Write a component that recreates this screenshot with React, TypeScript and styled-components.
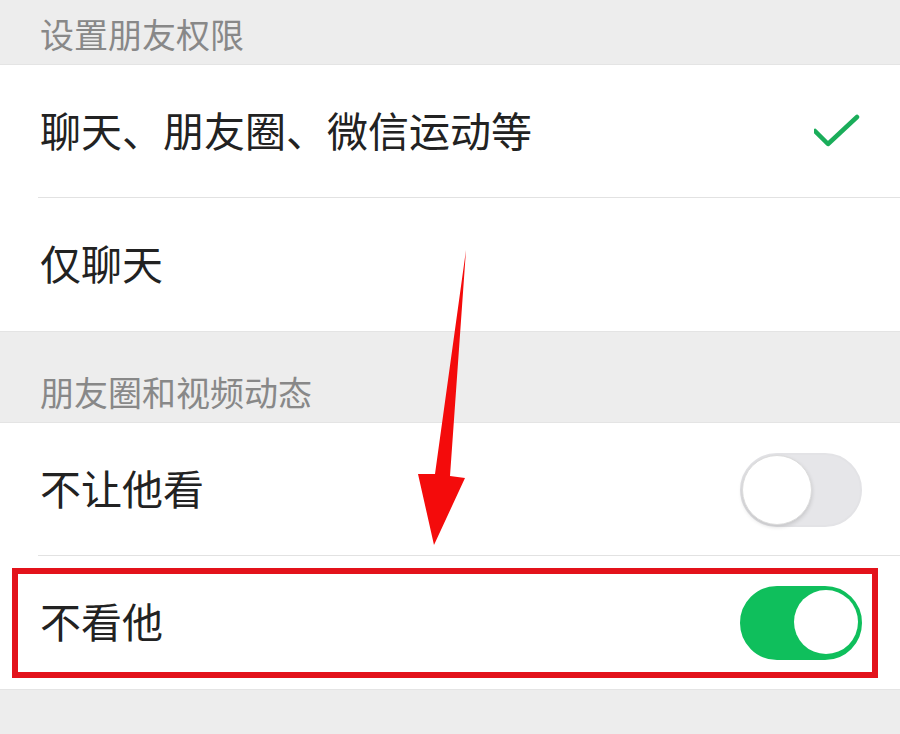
import React from "react"
import styled, { createGlobalStyle } from "styled-components"

const GlobalStyle = createGlobalStyle`
  html, body {
    margin: 0;
    padding: 0;
    background: #ededed;
  }
  body {
    font-family: "Noto Sans CJK SC", "Noto Sans", sans-serif;
  }
`

interface Item {
  label: string
  kind: "check" | "toggle" | "none"
  on?: boolean
  highlight?: boolean
}

const sections: { title: string; top: number; items: Item[] }[] = [
  {
    title: "设置朋友权限",
    top: 64,
    items: [
      { label: "聊天、朋友圈、微信运动等", kind: "check" },
      { label: "仅聊天", kind: "none" },
    ],
  },
  {
    title: "朋友圈和视频动态",
    top: 90,
    items: [
      { label: "不让他看", kind: "toggle", on: false },
      { label: "不看他", kind: "toggle", on: true, highlight: true },
    ],
  },
]

const CheckIcon = () => (
  <svg width="48" height="36" viewBox="0 0 48 36">
    <polyline points="1,17 14,30 43,3" fill="none" stroke="#1aad5a" strokeWidth="4.5" strokeLinecap="round" strokeLinejoin="round" />
  </svg>
)

const Arrow = () => (
  <ArrowLayer width="900" height="734" viewBox="0 0 900 734">
    <polygon points="466,250 450,476 465,478 434,545 418,474 435,474" fill="#f40b0b" />
  </ArrowLayer>
)

export default function App() {
  return (
    <>
      <GlobalStyle />
      <Page>
        {sections.map((s, si) => (
          <div key={si}>
            <Header $height={s.top}>{s.title}</Header>
            <Group>
              {s.items.map((it, i) => (
                <Row key={i} $last={i === s.items.length - 1}>
                  <Label>{it.label}</Label>
                  {it.kind === "check" && <CheckIcon />}
                  {it.kind === "toggle" && (
                    <Switch $on={!!it.on}>
                      <Knob $on={!!it.on} />
                    </Switch>
                  )}
                  {it.highlight && <Highlight />}
                </Row>
              ))}
            </Group>
          </div>
        ))}
        <Arrow />
      </Page>
    </>
  )
}

const Page = styled.div`
  position: relative;
  width: 900px;
  height: 734px;
  overflow: hidden;
  background: #ededed;
`
const Header = styled.div<{ $height: number }>`
  height: ${p => p.$height}px;
  box-sizing: border-box;
  display: flex;
  align-items: flex-end;
  padding: 0 0 8px 40px;
  font-size: 34px;
  line-height: 44px;
  color: #888888;
`
const Group = styled.div`
  background: #ffffff;
  border-top: 1px solid #e4e4e4;
  border-bottom: 1px solid #e4e4e4;
`
const Row = styled.div<{ $last: boolean }>`
  position: relative;
  height: 133px;
  box-sizing: border-box;
  display: flex;
  align-items: center;
  justify-content: space-between;
  padding: 0 38px 0 40px;
  &::after {
    content: "";
    display: ${p => (p.$last ? "none" : "block")};
    position: absolute;
    left: 38px;
    right: 0;
    bottom: 0;
    height: 1px;
    background: #e2e2e2;
  }
`
const Label = styled.div`
  font-size: 41px;
  line-height: 56px;
  padding-bottom: 5px;
  color: #222222;
`
const Switch = styled.div<{ $on: boolean }>`
  position: relative;
  width: 122px;
  height: 74px;
  border-radius: 37px;
  box-sizing: border-box;
  background: ${p => (p.$on ? "#0fbf5c" : "#e6e6e9")};
  border: 2px solid ${p => (p.$on ? "#0fbf5c" : "#e3e3e6")};
`
const Knob = styled.div<{ $on: boolean }>`
  position: absolute;
  top: ${p => (p.$on ? "2px" : "0px")};
  left: ${p => (p.$on ? "52px" : "0px")};
  width: ${p => (p.$on ? "64px" : "70px")};
  height: ${p => (p.$on ? "64px" : "70px")};
  border-radius: 50%;
  box-sizing: border-box;
  background: #ffffff;
  border: ${p => (p.$on ? "none" : "1px solid #dcdcdc")};
  box-shadow: ${p => (p.$on ? "none" : "0 2px 4px rgba(0,0,0,0.15)")};
`
const Highlight = styled.div`
  position: absolute;
  left: 12px;
  top: 12px;
  right: 22px;
  bottom: 11px;
  border: 6px solid #e3121b;
  pointer-events: none;
`
const ArrowLayer = styled.svg`
  position: absolute;
  left: 0;
  top: 0;
  pointer-events: none;
`
